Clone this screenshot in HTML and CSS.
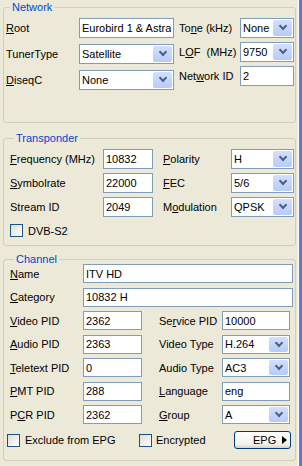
FILE: index.html
```html
<!DOCTYPE html>
<html lang="en">
<head>
  <meta charset="UTF-8">
  <meta name="viewport" content="width=device-width, initial-scale=1.0">
  <title>Channel Properties</title>
  <link rel="stylesheet" href="styles.css">
</head>
<body>

  <div class="panel">

    <!-- Group: Network -->
    <fieldset class="group network">
      <legend>Network</legend>
      <div class="cols">
        <div class="col col-left">
          <div class="row">
            <label class="lbl w73"><u>R</u>oot</label>
            <input class="text w95" type="text" value="Eurobird 1 &amp; Astra">
          </div>
          <div class="row">
            <label class="lbl w73">TunerType</label>
            <div class="combo w95"><span class="val">Satellite</span><span class="drop"></span></div>
          </div>
          <div class="row">
            <label class="lbl w73"><u>D</u>iseqC</label>
            <div class="combo w95"><span class="val">None</span><span class="drop"></span></div>
          </div>
        </div>
        <div class="col col-right">
          <div class="row">
            <label class="lbl w61">To<u>n</u>e (kHz)</label>
            <div class="combo w54"><span class="val">None</span><span class="drop"></span></div>
          </div>
          <div class="row">
            <label class="lbl w61">L<u>O</u>F&nbsp; (MHz)</label>
            <div class="combo w54"><span class="val">9750</span><span class="drop"></span></div>
          </div>
          <div class="row">
            <label class="lbl w61">Net<u>w</u>ork ID</label>
            <input class="text w54" type="text" value="2">
          </div>
        </div>
      </div>
    </fieldset>

    <!-- Group: Transponder -->
    <fieldset class="group transponder">
      <legend>Transponder</legend>
      <div class="rows">
        <div class="row">
          <label class="lbl w93"><u>F</u>requency (MHz)</label>
          <input class="text w50" type="text" value="10832">
          <label class="lbl w68 gap10"><u>P</u>olarity</label>
          <div class="combo w63"><span class="val">H</span><span class="drop"></span></div>
        </div>
        <div class="row">
          <label class="lbl w93"><u>S</u>ymbolrate</label>
          <input class="text w50" type="text" value="22000">
          <label class="lbl w68 gap10"><u>F</u>EC</label>
          <div class="combo w63"><span class="val">5/6</span><span class="drop"></span></div>
        </div>
        <div class="row">
          <label class="lbl w93">Stream ID</label>
          <input class="text w50" type="text" value="2049">
          <label class="lbl w68 gap10">M<u>o</u>dulation</label>
          <div class="combo w63"><span class="val">QPSK</span><span class="drop"></span></div>
        </div>
      </div>
      <div class="check-item dvb">
        <span class="check"></span>
        <span>DVB-S2</span>
      </div>
    </fieldset>

    <!-- Group: Channel -->
    <fieldset class="group channel">
      <legend>Channel</legend>
      <div class="rows">
        <div class="row">
          <label class="lbl w73"><u>N</u>ame</label>
          <input class="text wide" type="text" value="ITV HD">
        </div>
        <div class="row">
          <label class="lbl w73"><u>C</u>ategory</label>
          <input class="text wide" type="text" value="10832 H">
        </div>
        <div class="row">
          <label class="lbl w73"><u>V</u>ideo PID</label>
          <input class="text w59" type="text" value="2362">
          <label class="lbl w63 gap17">Se<u>r</u>vice PID</label>
          <input class="text w68" type="text" value="10000">
        </div>
        <div class="row">
          <label class="lbl w73"><u>A</u>udio PID</label>
          <input class="text w59" type="text" value="2363">
          <label class="lbl w63 gap17">Video Type</label>
          <div class="combo w68"><span class="val">H.264</span><span class="drop"></span></div>
        </div>
        <div class="row">
          <label class="lbl w73"><u>T</u>eletext PID</label>
          <input class="text w59" type="text" value="0">
          <label class="lbl w63 gap17">Audio Type</label>
          <div class="combo w68"><span class="val">AC3</span><span class="drop"></span></div>
        </div>
        <div class="row">
          <label class="lbl w73"><u>P</u>MT PID</label>
          <input class="text w59" type="text" value="288">
          <label class="lbl w63 gap17"><u>L</u>anguage</label>
          <input class="text w68" type="text" value="eng">
        </div>
        <div class="row">
          <label class="lbl w73">P<u>C</u>R PID</label>
          <input class="text w59" type="text" value="2362">
          <label class="lbl w63 gap17"><u>G</u>roup</label>
          <div class="combo w68"><span class="val">A</span><span class="drop"></span></div>
        </div>
      </div>
      <div class="footer">
        <div class="check-item exclude">
          <span class="check"></span>
          <span>Exclude from EPG</span>
        </div>
        <div class="check-item encrypted">
          <span class="check"></span>
          <span>Encrypted</span>
        </div>
        <button class="xp-button" type="button">EPG<span class="arrow"></span></button>
      </div>
    </fieldset>

  </div>

</body>
</html>
```

FILE: styles.css
```css
* {
  margin: 0;
  padding: 0;
  box-sizing: border-box;
}

/* Window edge on the right, dialog face fills the rest */
body {
  background: #4F7FD6;
  font: 11px 'Liberation Sans', Arial, sans-serif;
  color: #000;
}

.panel {
  width: 299px;
  min-height: 466px;
  background: #ECE9D8;
  border-right: 1px solid #fff;
  padding-top: 2px;
}

/* Group boxes */
.group {
  margin: 0 2px 0 3px;
  border: 1px solid #D0D0BF;
  border-radius: 3px;
  min-width: 0;
}

.group legend {
  margin-left: 4px;
  padding: 0 2px;
  line-height: 10px;
  color: #0046D5;
}

.network {
  padding: 6px 1px 32px 2px;
}

.transponder {
  margin-top: 10px;
  padding: 6px 1px 8px 6px;
}

.channel {
  margin-top: 8px;
  padding: 0 1px 11px 6px;
}

/* Rows and columns */
.cols {
  display: flex;
  gap: 5px;
}

.col {
  display: flex;
  flex-direction: column;
}

.col-left {
  gap: 6px;
}

.col-right {
  gap: 4px;
}

.rows {
  display: flex;
  flex-direction: column;
  gap: 4px;
}

.channel .rows {
  gap: 4.5px;
}

.row {
  display: flex;
  align-items: center;
  height: 20px;
}

.channel .row {
  height: 19px;
}

.lbl {
  flex: none;
  white-space: nowrap;
}

.lbl u {
  text-decoration: underline;
}

.w50 { width: 50px; }
.w54 { width: 54px; }
.w59 { width: 59px; }
.w61 { width: 61px; }
.w63 { width: 63px; }
.w68 { width: 68px; }
.w73 { width: 73px; }
.w93 { width: 93px; }
.w95 { width: 95px; }

.gap10 { margin-left: 10px; }
.gap17 { margin-left: 17px; }

/* Text boxes */
.text {
  flex: none;
  height: 20px;
  border: 1px solid #7F9DB9;
  background: #fff;
  padding: 0 2px;
  font: inherit;
  color: #000;
  outline: none;
}

.channel .text,
.channel .combo {
  height: 19px;
}

.text.wide {
  flex: 1;
  margin-right: 1px;
}

/* Combo boxes */
.combo {
  flex: none;
  display: flex;
  height: 20px;
  border: 1px solid #7F9DB9;
  background: #fff;
}

.combo .val {
  flex: 1;
  padding-left: 2px;
  display: flex;
  align-items: center;
  white-space: nowrap;
  overflow: hidden;
}

.combo .drop {
  position: relative;
  width: 19px;
  margin: 1px;
  border-radius: 2px;
  background: linear-gradient(#D3E0FD, #B6CBF6);
}

.combo .drop::after {
  content: '';
  position: absolute;
  left: 7px;
  top: 3px;
  width: 4px;
  height: 4px;
  border-right: 2px solid #4D6185;
  border-bottom: 2px solid #4D6185;
  transform: rotate(45deg);
}

/* Check boxes */
.check-item {
  display: flex;
  align-items: center;
  gap: 5px;
  white-space: nowrap;
}

.check {
  flex: none;
  width: 13px;
  height: 13px;
  border: 1px solid #1C5180;
  background: linear-gradient(135deg, #DCDCD7, #fff);
}

.dvb {
  margin-top: 7px;
  height: 13px;
}

/* Channel footer */
.footer {
  display: flex;
  align-items: center;
  height: 18px;
  margin-top: 7px;
}

.exclude {
  width: 132px;
  margin-left: -3px;
}

.encrypted {
  gap: 4px;
}

.xp-button {
  display: flex;
  align-items: center;
  justify-content: flex-start;
  width: 57px;
  height: 18px;
  margin-left: auto;
  margin-right: 3px;
  padding: 0 0 0 18px;
  border: 1px solid #003C74;
  border-radius: 3px;
  background: linear-gradient(#fff, #F3F2EC 75%, #D9D3C7);
  font: inherit;
  color: #000;
}

.xp-button .arrow {
  flex: none;
  margin-left: 6px;
  border-left: 5px solid #000;
  border-top: 4px solid transparent;
  border-bottom: 4px solid transparent;
}
```
